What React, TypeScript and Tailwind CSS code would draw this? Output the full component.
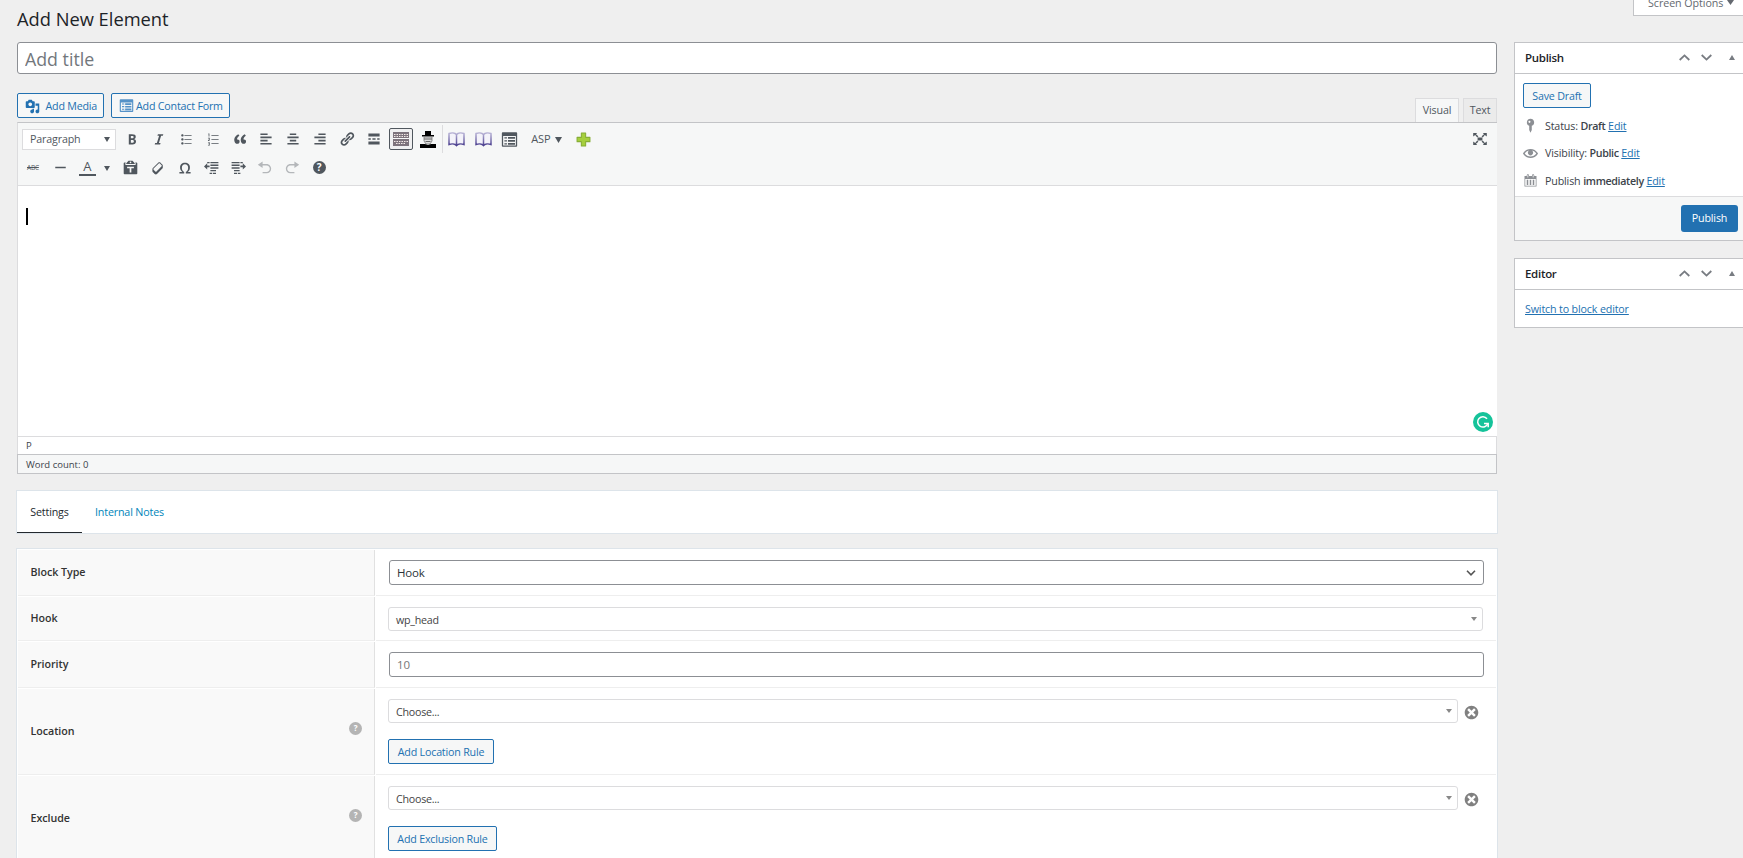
import type { ReactNode } from "react";
import clsx from "clsx";

const ICONS = {
  media:
    "M13 11V4c0-.55-.45-1-1-1h-1.67L9 1H5L3.67 3H2c-.55 0-1 .45-1 1v7c0 .55.45 1 1 1h10c.55 0 1-.45 1-1zM7 4.5c1.38 0 2.5 1.12 2.5 2.5S8.38 9.5 7 9.5 4.5 8.38 4.5 7 5.62 4.5 7 4.5zM14 6h5v10.5c0 1.38-1.12 2.5-2.5 2.5S14 17.88 14 16.5s1.12-2.5 2.5-2.5c.17 0 .34.02.5.05V9h-3V6zm-4 8.05V13h2v3.5c0 1.38-1.12 2.5-2.5 2.5S7 17.88 7 16.5 8.12 14 9.5 14c.17 0 .34.02.5.05z",
  form: "M2 1.500h16c.55 0 1 .45 1 1v15c0 .55-.45 1-1 1H2c-.55 0-1-.45-1-1v-15c0-.55.45-1 1-1zM2.500 6v11h15V6zM4 7.300h3v1.500H4zm4.200-.3h8.300v2.200H8.200zM4 10.800h3v1.500H4zm4.200-.3h8.300v2.200H8.200zM4 14.300h3v1.500H4zm4.200-.3h8.300v2.200H8.200z",
  bold: "M6 4v13h4.540c1.370 0 2.460-.33 3.260-1 .8-.66 1.200-1.580 1.200-2.770 0-.84-.17-1.510-.51-2.010s-.9-.85-1.670-1.030v-.09c.57-.1 1.020-.4 1.360-.9s.51-1.130.51-1.910c0-1.140-.39-1.980-1.170-2.500C12.750 4.260 11.500 4 9.780 4H6zm2.570 5.150V6.260h1.360c.73 0 1.270.11 1.610.32.34.22.51.58.51 1.070 0 .54-.16.92-.47 1.150s-.82.35-1.510.35h-1.500zm0 2.190h1.600c1.440 0 2.160.53 2.160 1.610 0 .6-.17 1.050-.51 1.340s-.86.43-1.570.43H8.570v-3.380z",
  italic: "M14.78 6h-2.130l-2.800 9h2.120l-.62 2H4.600l.62-2h2.140l2.800-9H8.030l.62-2h6.750z",
  ul: "M5.500 7C4.670 7 4 6.330 4 5.500 4 4.680 4.670 4 5.500 4 6.320 4 7 4.680 7 5.500 7 6.330 6.320 7 5.500 7zM8 5h9v1H8V5zm-2.500 7c-.83 0-1.500-.67-1.500-1.500C4 9.680 4.670 9 5.500 9c.82 0 1.500.68 1.500 1.500 0 .83-.68 1.500-1.500 1.500zM8 10h9v1H8v-1zm-2.500 7c-.83 0-1.500-.67-1.500-1.500 0-.82.67-1.500 1.500-1.500.82 0 1.500.68 1.500 1.500 0 .83-.68 1.500-1.500 1.500zM8 15h9v1H8v-1z",
  ol: "M8 5h9v1H8V5zm0 5h9v1H8v-1zm0 5h9v1H8v-1zM4.500 3h1v4h-1V4H4v-.600zM3.700 8.500H6v2L4.900 11.800H6v.8H3.700v-.7l1.500-1.800v-.8H3.700zM3.700 14H6v4H3.700v-.8h1.500v-.8h-1v-.8h1v-.8H3.700z",
  quote:
    "M9.490 13.220c0-.74-.2-1.380-.61-1.900-.62-.78-1.830-.88-2.530-.72-.29-1.650 1.110-3.750 2.920-4.650L7.880 4c-2.730 1.300-5.420 4.280-4.960 8.050C3.210 14.430 4.590 16 6.540 16c.85 0 1.560-.25 2.120-.75s.83-1.180.83-2.030zm8.050 0c0-.74-.2-1.380-.61-1.900-.63-.78-1.830-.88-2.530-.72-.29-1.650 1.110-3.750 2.920-4.650L15.930 4c-2.730 1.300-5.410 4.280-4.950 8.050.29 2.380 1.660 3.950 3.610 3.950.85 0 1.560-.25 2.120-.75s.83-1.180.83-2.030z",
  left: "M12 5V3H3v2h9zm5 4V7H3v2h14zm-5 4v-2H3v2h9zm5 4v-2H3v2h14z",
  center: "M14 5V3H6v2h8zm3 4V7H3v2h14zm-3 4v-2H6v2h8zm3 4v-2H3v2h14z",
  right: "M17 5V3H8v2h9zm0 4V7H3v2h14zm0 4v-2H8v2h9zm0 4v-2H3v2h14z",
  link: "M17.740 2.760c1.680 1.690 1.680 4.410 0 6.100l-1.530 1.520c-1.120 1.120-2.700 1.470-4.140 1.090l2.620-2.610.76-.77.76-.76c.84-.84.84-2.200 0-3.040-.84-.85-2.200-.85-3.040 0l-.77.76-3.380 3.380c-.37-1.440-.02-3.020 1.100-4.140l1.520-1.530c1.690-1.680 4.420-1.680 6.100 0zM8.590 13.430l5.340-5.340c.42-.42.42-1.100 0-1.520-.44-.43-1.130-.39-1.530 0l-5.330 5.340c-.42.42-.42 1.100 0 1.520.44.43 1.130.39 1.520 0zm-.76 2.290l4.140-4.150c.38 1.440.03 3.020-1.090 4.140l-1.520 1.530c-1.690 1.680-4.410 1.680-6.100 0-1.680-1.680-1.680-4.420 0-6.100l1.530-1.520c1.120-1.120 2.700-1.470 4.140-1.100l-4.140 4.150c-.85.84-.85 2.200 0 3.050.84.84 2.200.84 3.040 0z",
  more: "M17 7V3H3v4h14zM6 11V9H3v2h3zm6 0V9H8v2h4zm5 0V9h-3v2h3zm0 6v-4H3v4h14z",
  hr: "M3 9h14v2H3z",
  paste: "M12.380 2L15 5v1H5V5l2.640-3h4.740zM10 5c.55 0 1-.44 1-1 0-.55-.45-1-1-1s-1 .45-1 1c0 .56.45 1 1 1zm5.450-1H17c.55 0 1 .45 1 1v12c0 .56-.45 1-1 1H3c-.55 0-1-.44-1-1V5c0-.55.45-1 1-1h1.550L4 4.630V7h12V4.630zM14 11V9H6v2h3v5h2v-5h3z",
  eraser:
    "M14.290 4.590l1.100 1.110c.41.4.61.94.61 1.470v2.120c0 .53-.2 1.070-.61 1.470l-6.630 6.630c-.4.41-.94.61-1.470.61s-1.070-.2-1.470-.61l-1.110-1.100-1.100-1.110c-.41-.4-.61-.94-.61-1.470v-2.120c0-.54.2-1.070.61-1.480l6.630-6.620c.4-.41.94-.61 1.470-.61s1.060.2 1.470.61zm-6.210 9.700l6.420-6.420c.39-.39.39-1.030 0-1.430L12.360 4.300c-.19-.19-.45-.29-.72-.29s-.52.1-.71.29l-6.420 6.420c-.39.4-.39 1.040 0 1.430l2.140 2.140c.38.38 1.040.38 1.430 0z",
  omega:
    "M10 5.400c1.270 0 2.240.36 2.910 1.080.66.71 1 1.760 1 3.130 0 1.280-.23 2.370-.69 3.270-.47.89-1.270 1.520-2.220 2.120v2h6v-2h-3.690c.92-.64 1.620-1.340 2.120-2.340.49-1.010.74-2.130.74-3.350 0-1.780-.55-3.190-1.650-4.220S11.920 3.540 10 3.540s-3.430.53-4.520 1.570c-1.100 1.040-1.650 2.440-1.650 4.200 0 1.210.24 2.310.73 3.330.48 1.010 1.190 1.710 2.100 2.360H3v2h6v-2c-.98-.64-1.800-1.280-2.240-2.170-.45-.89-.67-1.960-.67-3.220 0-1.370.33-2.410 1-3.130C7.750 5.760 8.720 5.400 10 5.400z",
  outdent: "M4 2.500h3V4H4zm4 0h10V4H8zM8 5.500h10v2H8zM8 9h10v2H8zm0 3.500h7v1.500H8zM7 16h3v1.500H7zm4 0h4v1.500h-4zM0 8l4-4v3h3v2H4v3z",
  indent: "M2 2.500h10V4H2zm11 0h3V4h-3zM2 5.500h10v2H2zM2 9h10v2H2zm3 3.500h7v1.500H5zM5 16h4v1.500H5zm5 0h3v1.500h-3zM20 8l-4-4v3h-3v2h3v3z",
  undo: "M12 5H7V2L1 6l6 4V7h5c2.200 0 4 1.800 4 4s-1.800 4-4 4H7v1.700h5c3.300 0 5.700-2.500 5.700-5.700S15.300 5 12 5z",
  redo: "M8 5h5V2l6 4-6 4V7H8c-2.200 0-4 1.800-4 4s1.800 4 4 4h5v1.700H8c-3.300 0-5.700-2.500-5.700-5.700S4.700 5 8 5z",
  dismiss: "M10 2c4.420 0 8 3.580 8 8s-3.580 8-8 8-8-3.580-8-8 3.580-8 8-8zm5 11l-3-3 3-3-2-2-3 3-3-3-2 2 3 3-3 3 2 2 3-3 3 3z",
  expand: "M7 8h6v4H7zM1.500 2.500h5L5 4l3 2.500-1.500 1.500L4 5 1.500 7zM18.500 2.500h-5L15 4l-3 2.500L13.500 8 16 5l2.500 2zM1.500 17.500h5L5 16l3-2.500L6.500 12 4 15l-2.500-2zM18.500 17.500h-5L15 16l-3-2.500 1.500-1.500 2.500 3 2.500-2z",
  pin: "M10 1a4.800 4.800 0 0 1 1.700 9.300V16L10 19.500 8.300 16v-5.700A4.800 4.800 0 0 1 10 1zM8.600 3.700a1.400 1.400 0 1 0 0 2.800 1.400 1.400 0 0 0 0-2.800z",
  eye: "M19.700 9.400C17.700 6 14 3.900 10 3.900S2.300 6 .3 9.400L0 10l.3.6c2 3.400 5.700 5.500 9.700 5.500s7.700-2.100 9.700-5.500l.3-.6-.3-.6zM10 14.100c-3.100 0-6-1.600-7.700-4.100C3.600 8 5.700 6.600 8 6.100c-.9.6-1.500 1.700-1.500 2.900 0 1.900 1.600 3.500 3.500 3.500s3.500-1.600 3.500-3.500c0-1.200-.6-2.300-1.500-2.900 2.300.5 4.400 1.900 5.700 3.900-1.700 2.500-4.600 4.100-7.700 4.100z",
  calendar:
    "M15 4h3v14H2V4h3V3c0-.83.67-1.500 1.500-1.500S8 2.170 8 3v1h4V3c0-.83.67-1.500 1.500-1.500S15 2.170 15 3v1zM6 3v2.500c0 .28.22.5.5.5s.5-.22.5-.5V3c0-.28-.22-.5-.5-.5S6 2.720 6 3zm7 0v2.500c0 .28.22.5.5.5s.5-.22.5-.5V3c0-.28-.22-.5-.5-.5s-.5.22-.5.5zm4 14V8H3v9h14zM7 16V9H5v7h2zm4 0V9H9v7h2zm4 0V9h-2v7h2z",
};

type IconName = keyof typeof ICONS;

function Icon({ name, className = "size-4" }: { name: IconName; className?: string }) {
  return (
    <svg className={clsx("flex-none", className)} fill="currentColor" fillRule="evenodd" viewBox="0 0 20 20">
      <path d={ICONS[name]} />
    </svg>
  );
}

function Caret({ className }: { className?: string }) {
  return (
    <svg className={clsx("flex-none", className)} fill="currentColor" preserveAspectRatio="none" viewBox="0 0 6 5">
      <path d="M0 0h6L3 5z" />
    </svg>
  );
}

function HelpIcon({ className }: { className: string }) {
  return (
    <span className={clsx("flex flex-none items-center justify-center rounded-full font-bold text-white", className)}>?</span>
  );
}

function Tool({ children }: { children: ReactNode }) {
  return <span className="flex w-[26.9px] flex-none items-center justify-center">{children}</span>;
}

function BookIcon() {
  return (
    <svg className="h-[15px] w-[17px]" fill="none" viewBox="0 0 17 15">
      <defs>
        <linearGradient id="book" x1="0" x2="0" y1="0" y2="1">
          <stop offset="0" stopColor="#b9b4d6" />
          <stop offset="1" stopColor="#4b3f8f" />
        </linearGradient>
      </defs>
      <path
        d="M8.500 2.500C7 .8 3.500.5 1 1.500v11c2.500-1 6-.7 7.500 1 1.500-1.700 5-2 7.500-1v-11c-2.500-1-6-.7-7.500 1v11"
        fill="#f4f3fa"
        stroke="url(#book)"
        strokeWidth="1.500"
      />
    </svg>
  );
}

function KeyboardIcon() {
  return (
    <svg className="h-[14px] w-[16px]" viewBox="0 0 16 14">
      <path d="M0 0h16v6H0zM0 7h16v7H0z" fill="#7d737c" />
      <path d="M1 2.500h14M1 4.500h14M1 9.500h14M3 11.500h10" stroke="#f3e9e6" strokeDasharray="1.500 1" />
      <path d="M0 6.500h16" stroke="#f6f7f7" />
    </svg>
  );
}

function HatIcon() {
  return (
    <svg className="h-[17px] w-[16px]" viewBox="0 0 16 17">
      <path d="M5 0h6v4h3v1.500H2V4h3z" />
      <path d="M4 6h8v4l-2 3H6l-2-3z" fill="#ddd" stroke="#777" strokeWidth=".8" />
      <path d="M4 8h8M5.500 10.500h5" stroke="#666" />
      <path d="M0 13h5l3 1 3-1h5v4H0z" />
    </svg>
  );
}

function Button({ children, className }: { children: ReactNode; className: string }) {
  return (
    <button
      className={clsx(
        "flex h-[25px] flex-none items-center rounded-[2px] border border-[#2271b1] bg-[#f6f7f7] pt-px text-[10.700px] tracking-[-0.2px] whitespace-nowrap text-[#2271b1]",
        className,
      )}
      type="button"
    >
      {children}
    </button>
  );
}

function PanelHeader({ title }: { title: string }) {
  return (
    <div className="flex h-[31px] items-center border-b border-[#c3c4c7] pb-px pl-[10px] text-[#787c82]">
      <h2 className="w-[154px] pt-px text-[11.500px] font-semibold tracking-[-0.3px] text-[#1d2327]">{title}</h2>
      <svg className="h-[7px] w-[11px]" fill="none" stroke="currentColor" strokeWidth="1.800" viewBox="0 0 11 7">
        <path d="M.7 6l4.800-4.600L10.300 6" />
      </svg>
      <svg className="ml-[10.500px] h-[7px] w-[11px]" fill="none" stroke="currentColor" strokeWidth="1.800" viewBox="0 0 11 7">
        <path d="M.7 1l4.800 4.600L10.300 1" />
      </svg>
      <Caret className="ml-[17.500px] h-[5px] w-[6px] rotate-180" />
    </div>
  );
}

function PublishRow({ icon, label, value }: { icon: IconName; label: string; value: string }) {
  return (
    <div className="flex h-[27.500px] items-center">
      <Icon className="mr-[7px] size-[15px] text-[#8c8f94]" name={icon} />
      <span className="text-[10.700px] whitespace-pre">
        {label} <span className="font-semibold tracking-[-0.35px]">{value}</span>{" "}
        <a className="text-[#2271b1] underline underline-offset-1">Edit</a>
      </span>
    </div>
  );
}

function Field({ label, height, help, children }: { label: string; height: string; help?: boolean; children: ReactNode }) {
  return (
    <div className={clsx("mb-px flex flex-none gap-px", height)}>
      <div className="flex w-[357px] items-center justify-between border-r border-b border-[#e1e1e1] border-b-[#eee] bg-[#f9f9f9] pr-[12px] pl-[12.500px]">
        <span className="text-[10.700px] font-semibold tracking-[-0.04px] text-[#333]">{label}</span>
        {help && <HelpIcon className="mb-[7px] size-[13px] bg-[#b4b4b4] text-[8px]" />}
      </div>
      <div className="flex-1 border-b border-[#eee] pl-3">{children}</div>
    </div>
  );
}

function Select2({ value, className }: { value: string; className: string }) {
  return (
    <div className={clsx("flex h-6 items-center justify-between rounded-[3px] border border-[#dcdcde] bg-white pr-[5px] pl-[7px] text-[10.700px] tracking-[-0.25px] text-[#444]", className)}>
      <span className="pt-0.5">{value}</span>
      <Caret className="h-1 w-[6px] text-[#888]" />
    </div>
  );
}

function RuleField({ label, button, width }: { label: string; button: string; width: string }) {
  return (
    <Field height="h-[86px]" help label={label}>
      <div className="flex items-center pt-[10px]">
        <Select2 className="w-[1070px]" value="Choose..." />
        <Icon className="mt-0.5 ml-[5px] size-[17px] text-[#808080]" name="dismiss" />
      </div>
      <Button className={clsx("mt-4 justify-center", width)}>{button}</Button>
    </Field>
  );
}

export default function App() {
  return (
    <div className="h-[858px] w-[1743px] overflow-hidden bg-[#efefef] font-['Open_Sans',sans-serif] tracking-[-0.15px] text-[#3c434a]">
      <header className="flex h-[42px] justify-between">
        <h1 className="pt-[6px] pl-[17px] text-[18.300px] leading-[25px] tracking-normal text-[#1d2327]">Add New Element</h1>
        <div className="flex h-4 w-[110px] items-end border-b border-l border-[#c3c4c7] bg-white pl-[14px] text-[10.700px] tracking-[-0.05px] text-[#646970]">
          <span className="mb-1 leading-[15px]">Screen Options</span>
          <Caret className="mb-[10px] ml-[4px] h-[5px] w-[7px]" />
        </div>
      </header>

      <div className="flex items-start">
        <main className="ml-4 w-[1482px] flex-none">
          <div className="mx-px">
            <input
              className="block h-8 w-full rounded-[3px] border border-[#8c8f94] bg-white px-[7px] pt-0.5 text-[17.800px] tracking-normal placeholder:text-[#72777c]"
              placeholder="Add title"
            />

            {/* Media buttons and editor tabs */}
            <div className="flex h-12 pt-[19px]">
              <Button className="w-[87px] pl-[7px]">
                <Icon className="mr-[5.500px] size-[15px]" name="media" />
                Add Media
              </Button>
              <Button className="ml-[7px] w-[119px] pl-[7px]">
                <Icon className="mr-[2px] mb-px size-[15px] text-[#5592c8]" name="form" />
                Add Contact Form
              </Button>
              <div className="mt-[5px] ml-auto flex gap-1 text-[10.700px] text-[#50575e]">
                <span className="flex h-6 w-11 items-center justify-center border border-b-0 border-[#dcdcde] bg-[#f6f7f7]">Visual</span>
                <span className="flex h-6 w-[34px] items-center justify-center border border-b-0 border-[#dcdcde] bg-[#ebebeb]">Text</span>
              </div>
            </div>

            {/* Classic editor */}
            <section className="border-t border-l border-t-[#c3c4c7] border-l-[#dcdcde] bg-white">
              <div className="h-[63px] border-b border-[#dcdcde] bg-[#f6f7f7] pt-0.5 text-[#50575e]">
                <div className="flex h-7 items-center">
                  <div className="ml-1 flex h-[21px] w-[94px] flex-none items-center justify-between border border-[#dcdcde] bg-white pr-[5px] pl-[7px] text-[10.700px]">
                    Paragraph
                    <Caret className="mt-px h-[5px] w-[6px]" />
                  </div>
                  <div className="ml-[2.500px] flex h-full">
                    <Tool><Icon name="bold" /></Tool>
                    <Tool><Icon name="italic" /></Tool>
                    <Tool><Icon name="ul" /></Tool>
                    <Tool><Icon name="ol" /></Tool>
                    <Tool><Icon name="quote" /></Tool>
                    <Tool><Icon name="left" /></Tool>
                    <Tool><Icon name="center" /></Tool>
                    <Tool><Icon name="right" /></Tool>
                    <Tool><Icon name="link" /></Tool>
                    <Tool><Icon name="more" /></Tool>
                    <Tool>
                      <span className="flex h-[22px] w-6 items-center justify-center rounded-[2px] border border-[#50575e] bg-[#f0f0f1]">
                        <KeyboardIcon />
                      </span>
                    </Tool>
                    <Tool><HatIcon /></Tool>
                  </div>
                  <div className="ml-[0.500px] flex h-full border-l border-[#dcdcde]">
                    <Tool><BookIcon /></Tool>
                    <Tool><BookIcon /></Tool>
                    <Tool><Icon className="size-[17px]" name="form" /></Tool>
                  </div>
                  <span className="ml-[8px] pt-px text-[11px] tracking-[-0.2px]">ASP</span>
                  <Caret className="mt-0.5 ml-[5px] h-[6px] w-[7px]" />
                  <svg className="mt-px ml-[14px] size-[15px]" viewBox="0 0 14 14">
                    <path d="M5 1h4v4h4v4H9v4H5V9H1V5h4z" fill="#a5cf3c" stroke="#86ad35" strokeLinejoin="round" />
                  </svg>
                  <Icon className="mr-[9.500px] ml-auto size-4" name="expand" />
                </div>

                <div className="flex h-7 items-center pt-px">
                  <span className="ml-[9px] w-[14px] text-[6.500px] tracking-[-0.2px] line-through">ABC</span>
                  <span className="ml-[6.500px] flex"><Tool><Icon className="size-[15px]" name="hr" /></Tool></span>
                  <span className="ml-[4.500px] flex h-[17px] w-[17px] items-center justify-center border-b-2 border-[#50575e] text-[13px] leading-none">A</span>
                  <Caret className="mt-px ml-[8px] h-[5px] w-[6px]" />
                  <span className="ml-[7.500px] flex">
                    <Tool><Icon className="size-[17px]" name="paste" /></Tool>
                    <Tool><Icon name="eraser" /></Tool>
                    <Tool><Icon name="omega" /></Tool>
                    <Tool><Icon name="outdent" /></Tool>
                    <Tool><Icon name="indent" /></Tool>
                    <Tool><Icon className="size-4 text-[#b4b7ba]" name="undo" /></Tool>
                    <Tool><Icon className="size-4 text-[#b4b7ba]" name="redo" /></Tool>
                    <Tool><HelpIcon className="size-[13px] bg-[#50575e] text-[10px]" /></Tool>
                  </span>
                </div>
              </div>

              <div className="flex h-[250px] justify-between">
                <span className="mt-[22px] ml-2 h-[17px] w-[2px] bg-black" />
                <svg className="mt-auto mr-[4px] mb-1 size-5" fill="none" viewBox="0 0 20 20">
                  <circle cx="10" cy="10" fill="#15c39a" r="10" />
                  <path d="M14 6.700a5.200 5.200 0 1 0 .8 4.800" stroke="#fff" strokeWidth="1.500" />
                  <path d="M11 11.500h4.200v3.700" stroke="#fff" strokeWidth="1.500" />
                </svg>
              </div>
              <div className="flex h-[18px] items-center border-t border-r border-[#dcdcde] pt-0.5 pl-2 text-[9.500px]">P</div>
            </section>
            <div className="flex h-5 items-center border border-[#c3c4c7] bg-[#f6f7f7] pt-0.5 pl-2 text-[9.500px] tracking-normal">Word count: 0</div>
          </div>

          {/* Element settings */}
          <nav className="mt-4 flex h-11 border border-[#dde4ea] bg-white text-[10.700px]">
            <a className="flex w-[65px] items-center justify-center border-b border-[#23282d] pt-px text-[#23282d]">Settings</a>
            <a className="flex items-center pl-[13px] text-[#0085ba]">Internal Notes</a>
          </nav>

          <section className="mt-[14px] flex h-[330px] flex-col overflow-hidden border border-[#dde4ea] bg-white p-px">
            <Field height="h-[46px]" label="Block Type">
              <div className="mt-[10px] ml-px flex h-[25px] w-[1095px] items-center justify-between rounded-[3px] border border-[#8c8f94] pr-[7px] pl-[7px] text-[11.500px] text-[#2c3338]">
                Hook
                <svg className="h-[6px] w-[10px]" fill="none" stroke="#555" strokeWidth="1.600" viewBox="0 0 10 6">
                  <path d="M1 .8l4 4 4-4" />
                </svg>
              </div>
            </Field>
            <Field height="h-[44px]" label="Hook">
              <Select2 className="mt-[10px] w-[1095px]" value="wp_head" />
            </Field>
            <Field height="h-[46px]" label="Priority">
              <input
                className="mt-[10px] ml-px block h-[25px] w-[1095px] rounded-[3px] border border-[#8c8f94] bg-white px-[7px] text-[11.500px] placeholder:text-[#777]"
                placeholder="10"
              />
            </Field>
            <RuleField button="Add Location Rule" label="Location" width="w-[106px]" />
            <RuleField button="Add Exclusion Rule" label="Exclude" width="w-[109px]" />
          </section>
        </main>

        <aside className="ml-4 w-[240px] flex-none">
          <section className="mb-[17px] h-[199px] border border-[#c3c4c7] bg-white">
            <PanelHeader title="Publish" />
            <div className="h-[123px] border-b border-[#dcdcde] pt-[9px] pl-2">
              <Button className="mb-[4px] w-[68px] justify-center">Save Draft</Button>
              <PublishRow icon="pin" label="Status:" value="Draft" />
              <PublishRow icon="eye" label="Visibility:" value="Public" />
              <PublishRow icon="calendar" label="Publish" value="immediately" />
            </div>
            <div className="h-[43px] bg-[#f6f7f7] pt-[7px] pl-[166px]">
              <button className="h-[27px] w-[57px] rounded-[3px] bg-[#2271b1] text-[10.700px] text-white" type="button">
                Publish
              </button>
            </div>
          </section>

          <section className="h-[70px] border border-[#c3c4c7] bg-white">
            <PanelHeader title="Editor" />
            <a className="flex h-[38px] items-center pl-[10px] text-[10.700px] text-[#2271b1] underline underline-offset-1">
              Switch to block editor
            </a>
          </section>
        </aside>
      </div>
    </div>
  );
}
